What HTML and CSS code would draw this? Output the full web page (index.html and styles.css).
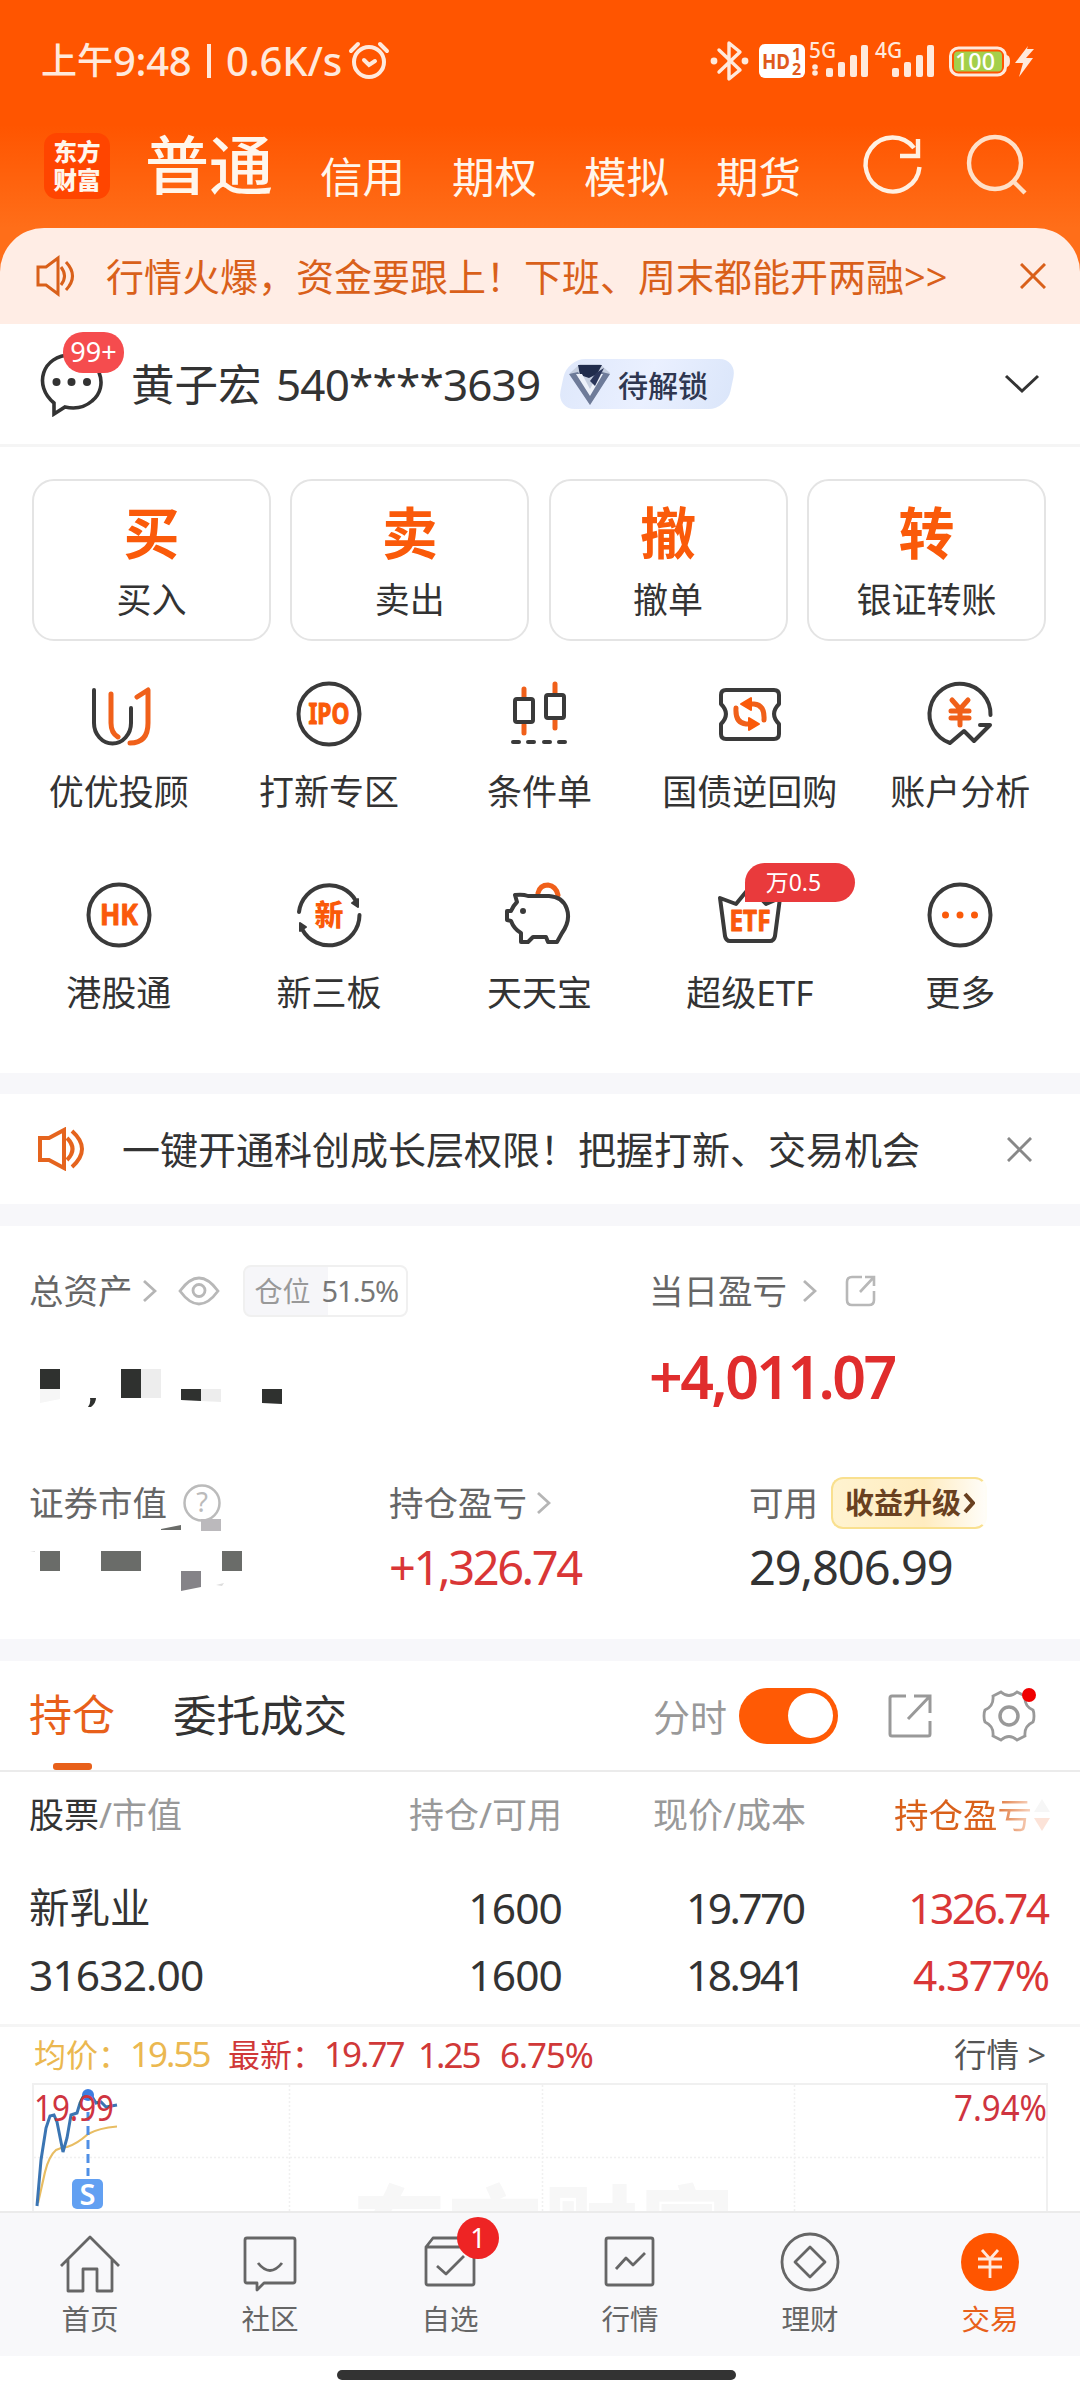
FILE: index.html
```html
<!DOCTYPE html>
<html lang="zh-CN">
<head>
<meta charset="utf-8">
<title>交易</title>
<link rel="stylesheet" href="styles.css">
</head>
<body>
<div class="page">
  <header class="top">
    <div class="status">
      <div class="status-text"><span class="st-cn">上午</span><span class="st-time">9:48</span><span class="st-sep"></span><span class="st-speed">0.6K/s</span></div>
      <svg class="alarm" width="42" height="42" viewBox="0 0 42 42" fill="none" stroke="#ffe9dc" stroke-width="4" stroke-linecap="round"><circle cx="21" cy="22" r="15"/><path d="M16 20l5 5 6-4M3 11l7-7M39 11l-7-7"/></svg>
      <svg class="signals" width="330" height="44" viewBox="0 0 330 44">
        <g fill="none" stroke="#ffe9dc" stroke-width="3.4" stroke-linejoin="round" stroke-linecap="round"><path d="M9 11l21 20-11 9V4l11 9L9 33"/></g>
        <circle cx="4" cy="22" r="3.4" fill="#ffe9dc"/><circle cx="35" cy="22" r="3.4" fill="#ffe9dc"/>
        <rect x="49" y="5" width="46" height="34" rx="6" fill="#fff"/>
        <text x="52" y="29.500" class="hd" textLength="28" lengthAdjust="spacingAndGlyphs">HD</text>
        <text x="82" y="20.500" class="hdn">1</text><text x="82" y="35.500" class="hdn">2</text>
        <g fill="#ffe9dc"><text x="99" y="19" class="net" textLength="27" lengthAdjust="spacingAndGlyphs">5G</text><text x="165" y="19" class="net" textLength="27" lengthAdjust="spacingAndGlyphs">4G</text>
        <circle cx="105" cy="28" r="2.800"/><circle cx="105" cy="34" r="2.800"/>
        <rect x="116" y="29" width="7" height="9" rx="2"/><rect x="128" y="23" width="7" height="15" rx="2"/><rect x="140" y="16" width="7" height="22" rx="2"/><rect x="151" y="6" width="7" height="32" rx="2"/>
        <rect x="182" y="29" width="7" height="9" rx="2"/><rect x="194" y="23" width="7" height="15" rx="2"/><rect x="206" y="16" width="7" height="22" rx="2"/><rect x="217" y="6" width="7" height="32" rx="2"/>
        <path d="M296 16q4 0 4 6t-4 6z"/><path d="M318 7l-13 17h8l-4 14 14-19h-7l8-9h-7z"/></g>
        <rect x="240.500" y="9" width="55" height="27" rx="8" fill="none" stroke="#ffe9dc" stroke-width="3"/>
        <rect x="244" y="12.500" width="48" height="20" rx="4" fill="#a4cf4a"/>
        <text x="245" y="30.500" class="bat" textLength="40" lengthAdjust="spacingAndGlyphs">100</text>
      </svg>
    </div>
    <nav class="nav">
      <div class="logo"><span>东方</span><span>财富</span></div>
      <b class="nav-main">普通</b>
      <span class="nav-tab">信用</span><span class="nav-tab">期权</span><span class="nav-tab">模拟</span><span class="nav-tab">期货</span>
      <svg class="nav-icons" width="170" height="66" viewBox="860 133 170 66" fill="none" stroke="#fff0e2" stroke-width="4.400"><path d="M914 148A27 27 0 1 0 919.500 167"/><path d="M918 139v17h-18"/><circle cx="995" cy="163" r="26" stroke="#ffe0c8"/><path d="M1013 181l12 12" stroke="#ffe0c8"/></svg>
    </nav>
  </header>

  <section class="notice">
    <svg width="42" height="42" viewBox="0 0 42 42" fill="none" stroke="#d9601a" stroke-width="3"><path d="M3 12h8L23 3v36l-12-9H3zM26 12q7 9 0 18M31 7q13 14 0 28"/></svg>
    <p>行情火爆，资金要跟上！下班、周末都能开两融&gt;&gt;</p>
    <svg class="close" width="26" height="26" viewBox="0 0 26 26" fill="none" stroke="#d9601a" stroke-width="3"><path d="M1 1l24 24M25 1L1 25"/></svg>
  </section>

  <section class="user">
    <div class="msg">
      <svg width="66" height="66" viewBox="38 350 66 66" fill="none" stroke="#333" stroke-width="3.600"><path d="M54 413V402C33 385 42 354 71 354s39 32 21 46c-8 7-18 8-27 6z"/><g fill="#333" stroke="none"><circle cx="56.500" cy="381" r="4"/><circle cx="71.500" cy="381" r="4"/><circle cx="87" cy="381" r="4"/></g></svg>
      <i class="count">99+</i>
    </div>
    <span class="name">黄子宏</span><span class="acct">540****3639</span>
    <div class="level">
      <svg width="44" height="46" viewBox="0 0 44 46"><path d="M2 12L12 3h20l10 9-20 32z" fill="#c6cfe0"/><path d="M10 4h24l-5 9-8 4-9-3z" fill="#202c4c"/><path d="M1 13l9-2 12 21L34 11l8 2-20 31z" fill="#6e7b99"/><path d="M8 13h6l8 15 8-15h5L22 35z" fill="#eef2fa"/><path d="M22 20l6-8 8-5-9 18z" fill="#2b365a"/></svg>
      <span>待解锁</span>
    </div>
    <svg class="down" width="36" height="22" viewBox="0 0 36 22" fill="none" stroke="#333" stroke-width="3"><path d="M2 3l16 15L34 3"/></svg>
  </section>

  <section class="actions">
    <div class="action"><b>买</b><span>买入</span></div>
    <div class="action"><b>卖</b><span>卖出</span></div>
    <div class="action"><b>撤</b><span>撤单</span></div>
    <div class="action"><b>转</b><span>银证转账</span></div>
  </section>

  <section class="grid">
    <div class="cell"><svg class="ic" viewBox="-35 -35 70 70"><path d="M-25-24V9a18 20 0 0 0 37 0V-6"/><path class="o" d="M-8-20V9q0 10 7 14M18-17l11-7V9q0 20-18 20"/></svg><span>优优投顾</span></div>
    <div class="cell"><svg class="ic" viewBox="-35 -35 70 70"><circle r="30.500"/><text y="10" textLength="41" lengthAdjust="spacingAndGlyphs">IPO</text></svg><span>打新专区</span></div>
    <div class="cell"><svg class="ic" viewBox="-35 -35 70 70"><path class="o" d="M-15-25v9M-15 11v8M16-30v9M16 5v9"/><rect x="-24" y="-15" width="18" height="23" rx="2"/><rect x="7" y="-19" width="18" height="23" rx="2"/><path d="M-26 28h6M-11 28h6M5 28h6M20 28h6"/></svg><span>条件单</span></div>
    <div class="cell"><svg class="ic" viewBox="-35 -35 70 70"><path d="M-24-24h48q5 0 5 5v9q-10 10 0 20v10q0 5-5 5h-48q-5 0-5-5V10q10-10 0-20v-9q0-5 5-5z"/><path class="o" d="M-1-10h5Q15-9 14 6M1 10h-5Q-15 9-14-6"/><path class="f" d="M-9-10l10-6v12zM9 10l-10-6v12z"/></svg><span>国债逆回购</span></div>
    <div class="cell"><svg class="ic" viewBox="-35 -35 70 70"><path d="M30.500 1A30.500 30.500 0 1 0-10 29L4 17l10 10L30 11H20"/><path class="o y" d="M-8-14L0-5l8-9M-9-3H9M-9 4H9M0-4v15"/></svg><span>账户分析</span></div>
    <div class="cell"><svg class="ic" viewBox="-35 -35 70 70"><circle r="30.500"/><text y="10" textLength="38" lengthAdjust="spacingAndGlyphs">HK</text></svg><span>港股通</span></div>
    <div class="cell"><svg class="ic" viewBox="-35 -35 70 70"><path d="M-30-3A30.500 30.500 0 0 1 27-14M30.500 0A30.500 30.500 0 0 1-27 14"/><path class="k" d="M29-16v8l-6-4zM-29 16V8l6 4z"/><text y="10.500" class="xin">新</text></svg><span>新三板</span></div>
    <div class="cell"><svg class="ic" viewBox="-35 -35 70 70"><path class="o" d="M-1-22Q1-30 9-30Q17-29 19-20"/><path d="M-24-20q8-1 13 1h21c18 1 25 20 13 37l-5 9H9l-2-5H-6l-5 5h-7v-9q-7-4-10-12l-4-1V-4h4q2-5 6-9z"/><circle class="k" cx="-16" cy="-4" r="2"/></svg><span>天天宝</span></div>
    <div class="cell"><svg class="ic" viewBox="-35 -35 70 70"><path d="M-30-17l5 38q1 5 5 5h40q4 0 5-5l5-38-14 6L0-28l-14 17z"/><text y="16" textLength="41" lengthAdjust="spacingAndGlyphs">ETF</text></svg><i class="tag">万0.5</i><span>超级ETF</span></div>
    <div class="cell"><svg class="ic" viewBox="-35 -35 70 70"><circle r="30.500"/><g class="f"><circle cx="-14.500" r="2.500"/><circle r="2.500"/><circle cx="14.500" r="2.500"/></g></svg><span>更多</span></div>
  </section>

  <section class="notice2">
    <svg width="50" height="44" viewBox="0 0 50 44" fill="none" stroke="#e5641e" stroke-width="4"><path d="M3 11h9L27 3v38l-15-8H3zM30 11q11 11 0 22M35 4q20 18 0 36"/></svg>
    <p>一键开通科创成长层权限！把握打新、交易机会</p>
    <svg class="close" width="25" height="25" viewBox="0 0 26 26" fill="none" stroke="#888" stroke-width="3"><path d="M1 1l24 24M25 1L1 25"/></svg>
  </section>

  <section class="assets">
    <div class="total">
      <div class="lab"><span>总资产</span><svg class="chev c1" viewBox="0 0 14 24"><path d="M1 2l11 10L1 22"/></svg>
        <svg class="eye" width="42" height="30" viewBox="0 0 42 30" fill="none" stroke="#b8b8b8" stroke-width="2.800"><path d="M2 15Q21-11 40 15Q21 41 2 15z"/><circle cx="21" cy="14.500" r="6"/></svg>
        <div class="chip"><span>仓位</span><em>51.5%</em></div></div>
      <svg class="mosaic" width="260" height="50" viewBox="30 1365 260 50"><path fill="#2f312f" d="M40 1369h20v20H40zM121 1369h20v29h-20zM181 1389h20v12l-20-1zM262 1389h20v15l-20-1zM90 1398h6q0 5-5 9h-3q3-4 2-9z"/><path fill="#ededed" d="M141 1369h20v29h-20zM201 1389h20v13l-20-1z"/><path fill="#f6f6f6" d="M40 1389h20v10l-20 4z"/></svg>
    </div>
    <div class="today">
      <div class="lab"><span>当日盈亏</span><svg class="chev c2" viewBox="0 0 14 24"><path d="M1 2l11 10L1 22"/></svg>
        <svg class="share-s" width="32" height="32" viewBox="0 0 32 32" fill="none" stroke="#b8b8b8" stroke-width="2.600"><path d="M17 2H7Q2 2 2 7v18q0 5 5 5h17q5 0 5-5V16M20 2h9v9M29 2L15 17"/></svg></div>
      <div class="big">+4,011.07</div>
    </div>
    <div class="mv">
      <div class="lab"><span>证券市值</span><svg class="ask" width="40" height="40" viewBox="0 0 40 40"><circle cx="20" cy="20" r="17.500" fill="none" stroke="#bbb" stroke-width="2.500"/><text x="20" y="29" text-anchor="middle">?</text></svg></div>
      <svg class="mosaic2" width="230" height="78" viewBox="20 1515 230 78"><path fill="#6a6c69" d="M40 1551h20v20H40zM101 1551h40v20h-40zM222 1551h20v20h-20zM161 1529l20-4v5h-20z"/><path fill="#858388" d="M181 1571h20v16l-20 4z"/><path fill="#bbb9bc" d="M201 1519h20v12h-20z"/><path fill="#ddd" d="M216 1585l8-2-2 3zM30 1552l5-1v1z"/></svg>
    </div>
    <div class="hold">
      <div class="lab"><span>持仓盈亏</span><svg class="chev c3" viewBox="0 0 14 24"><path d="M1 2l11 10L1 22"/></svg></div>
      <div class="val red n1">+1,326.74</div>
    </div>
    <div class="avail">
      <div class="lab"><span>可用</span><div class="gold">收益升级<svg width="12" height="22" viewBox="0 0 12 22" fill="none" stroke="#694020" stroke-width="4"><path d="M2 2l8 9-8 9"/></svg></div></div>
      <div class="val n2">29,806.99</div>
    </div>
  </section>

  <section class="tabs">
    <span class="tab on">持仓</span><span class="tab t2">委托成交</span><span class="fs">分时</span>
    <div class="toggle"></div>
    <svg class="share-l" width="44" height="44" viewBox="0 0 44 44" fill="none" stroke="#999" stroke-width="3"><path d="M18 2H4q-2 0-2 2v36q0 2 2 2h36q2 0 2-2V27M26 2h16v17M42 2L20 25"/></svg>
    <div class="gear"><svg width="54" height="54" viewBox="-27 -27 54 54" fill="none" stroke="#999" stroke-width="2.800"><path d="M-8-24Q0-17 8-24L16-20Q15-10 24-6Q25-4 25 0T24 6Q15 10 16 20L8 24Q0 17-8 24L-16 20Q-15 10-24 6Q-25 4-25 0T-24-6Q-15-10-16-20z"/><circle r="9" stroke-width="3.500"/></svg><i></i></div>
  </section>

  <section class="table">
    <div class="tr th"><span class="l"><b>股票</b>/市值</span><span>持仓/可用</span><span>现价/成本</span><span class="sort">持仓盈亏<svg width="16" height="32" viewBox="0 0 16 32"><path d="M0 13L8 0l8 13z" fill="#f6f6f6"/><path d="M0 19h16L8 32z" fill="#fce3d8"/></svg></span></div>
    <div class="tr r1"><span class="l cn">新乳业</span><span class="k1">1600</span><span class="k2">19.770</span><span class="red k2">1326.74</span></div>
    <div class="tr r2"><span class="l k1">31632.00</span><span class="k1">1600</span><span class="k2">18.941</span><span class="red k3">4.377%</span></div>
  </section>

  <section class="quote">
    <span class="avg">均价：<em>19.55</em></span><span class="new">最新：<em>19.77</em></span><em class="chg">1.25</em><em class="pct">6.75%</em><span class="more">行情 &gt;</span>
  </section>
  <svg class="chart" width="1080" height="130" viewBox="0 2082 1080 130">
    <text x="352" y="2265" class="wm" textLength="382">东方财富</text>
    <g fill="none" stroke="#f0f0f0" stroke-width="2"><path d="M33 2212V2084h1014v128"/><path d="M34 2157.500h1012M289.500 2085v127M542.500 2085v127M794.500 2085v127" stroke-width="1.500" stroke-dasharray="2 2"/></g>
    <path d="M38 2203L45 2172Q49 2156 56 2150Q62 2147 67 2147Q77 2144 88 2134Q99 2128 117 2126.500" fill="none" stroke="#e8bd63" stroke-width="2.200"/>
    <path d="M88 2112v64" stroke="#4f8fe6" stroke-width="3" stroke-dasharray="9 5"/>
    <path d="M37 2206L41 2160L46 2128L50 2116L54 2115L57 2122L63 2152L67 2138L71 2115L77 2113L80 2103L84 2095H91L96 2103L101 2102L106 2107L117 2105" fill="none" stroke="#3b75b3" stroke-width="3"/>
    <circle cx="88" cy="2095" r="6" fill="#3d7de0"/>
    <text x="34" y="2120.500" class="cl" textLength="80" lengthAdjust="spacingAndGlyphs">19.99</text>
    <text x="954" y="2120.500" class="cl" textLength="93" lengthAdjust="spacingAndGlyphs">7.94%</text>
    <rect x="72" y="2179" width="31" height="30" rx="5" fill="#62a0f2"/><text x="87.500" y="2204.500" class="s" text-anchor="middle">S</text>
  </svg>

  <footer class="tabbar">
    <div class="ti"><svg viewBox="-32 -32 64 64"><path d="M-29 4L0-25 29 4M-22-3v32h15V7H7v22h15V-3"/></svg><span>首页</span></div>
    <div class="ti"><svg viewBox="-32 -32 64 64"><path d="M-23-24h46q2 0 2 2v41q0 2-2 2H-6l-7 7v-7h-10q-2 0-2-2v-41q0-2 2-2zM-12 1Q0 16 12 1"/></svg><span>社区</span></div>
    <div class="ti"><svg viewBox="-32 -32 64 64"><path d="M-24-15h48v36q0 2-2 2h-44q-2 0-2-2zM-24-15l7-9h34l7 9M-13 4l9 8L14-6"/></svg><i class="dot">1</i><span>自选</span></div>
    <div class="ti"><svg viewBox="-32 -32 64 64"><rect x="-24" y="-24" width="47" height="47" rx="2"/><path d="M-14 7L-4-4 3 3 15-9"/></svg><span>行情</span></div>
    <div class="ti"><svg viewBox="-32 -32 64 64"><circle r="28"/><path d="M0-15L15 0 0 15-15 0z"/></svg><span>理财</span></div>
    <div class="ti on"><svg viewBox="-32 -32 64 64"><circle r="29" class="fill"/><path d="M-8-12L0-3l8-9M-12-3h24M-12 5h24M0-3v19"/></svg><span>交易</span></div>
  </footer>
  <div class="home"><i></i></div>
</div>
</body>
</html>
```

FILE: styles.css
```css
* { box-sizing: border-box; margin: 0; padding: 0; }
body { width: 1080px; height: 2400px; overflow: hidden; background: #fff; color: #333; font-family: "Noto Sans", "Noto Sans CJK SC", sans-serif; }
i, em { font-style: normal; }
svg { display: block; flex: none; }
span, p, b { white-space: nowrap; }
.page { display: flex; flex-direction: column; height: 2400px; background: linear-gradient(#ff6e19 300px, #fff 300px); }
.page > * { flex: none; }
.red { color: #d93636; }

.top { height: 228px; background: linear-gradient(#ff5500 0 125px, #ff6e19 228px); }
.status { height: 122px; padding-left: 41px; display: flex; align-items: center; color: #ffe9dc; }
.status-text { display: flex; align-items: center; line-height: 50px; }
.st-cn { font-size: 36px; font-weight: 500; }
.st-time { font-size: 40px; width: 82px; font-weight: 500; letter-spacing: -.3px; }
.st-sep { width: 4px; height: 34px; margin: 0 15px 0 12px; background: #ffe9dc; }
.st-speed { font-size: 40px; width: 124px; font-weight: 500; letter-spacing: -.1px; }
.alarm { margin: -1px 0 0 -2px; }
.signals { margin-left: 320px; }
.hd { font: 700 22px "Noto Sans"; fill: #e05a1c; }
.hdn { font: 700 16px "Noto Sans"; fill: #e05a1c; }
.net { font: 500 21px "Noto Sans"; }
.bat { font: 500 24px "Noto Sans"; fill: #fff; }

.nav { height: 106px; padding: 0 0 0 44px; display: flex; align-items: flex-start; color: #fff6ec; }
.logo { width: 66px; height: 66px; margin-top: 11px; border-radius: 13px; background: #ff4500; display: flex; flex-direction: column; align-items: center; justify-content: center; font-size: 23.500px; font-weight: 900; line-height: 28px; }
.nav-main { margin: -2px 0 0 35px; width: 130px; font-size: 64px; font-weight: 500; line-height: 89px; }
.nav-tab { width: 132px; font-size: 42.500px; line-height: 109px; }
.nav-main + .nav-tab { margin-left: 45px; }
.nav-icons { margin: 11px 0 0 12px; }

.notice { height: 96px; padding: 0 34px 0 35px; display: flex; align-items: center; background: #ffede5; color: #d9601a; border-radius: 44px 44px 0 0; }
.notice p { margin-left: 29px; font-size: 38px; line-height: 56px; }
.close { margin-left: auto; }

.user { height: 123px; padding: 0 40px 0 38px; display: flex; align-items: center; background: #fff; border-bottom: 3px solid #f5f5f5; }
.msg { position: relative; }
.count { position: absolute; left: 25px; top: -19px; width: 61px; height: 41px; border-radius: 20px; background: #f54c4e; color: #fff; font-size: 27px; line-height: 40px; text-align: center; }
.name { margin-left: 27px; width: 145px; font-size: 43.500px; line-height: 60px; }
.acct { width: 282px; font-size: 44px; line-height: 60px; letter-spacing: -.8px; }
.level { width: 178px; height: 50px; display: flex; align-items: center; color: #2e3650; font-size: 30px; font-weight: 500; position: relative; padding-left: 10px; z-index: 0; }
.level::before { content: ""; position: absolute; inset: 0 4px; transform: skewX(-12deg); border-radius: 18px; background: linear-gradient(100deg, #dfe8fb, #eaf0ff 50%, #dbe6fa); z-index: -1; }
.level span { margin-left: 6px; }
.down { margin-left: auto; }

.actions { height: 195px; padding: 32px 32px 0; display: grid; grid-template-columns: repeat(4, 239px); column-gap: 19.300px; background: #fff; }
.action { height: 162px; border: 2px solid #e4e4e4; border-radius: 22px; display: flex; flex-direction: column; align-items: center; }
.action b { font-size: 56px; font-weight: 700; line-height: 70px; margin-top: 16px; color: #fa5a0a; }
.action span { font-size: 35px; line-height: 50px; margin-top: 8px; }

.grid { height: 431px; padding: 37px 14px 0 13.500px; display: grid; grid-template-columns: repeat(5, 210.400px); grid-auto-rows: 201px; background: #fff; }
.cell { display: flex; flex-direction: column; align-items: center; position: relative; }
.cell span { font-size: 35px; line-height: 50px; margin-top: 18px; }
.ic { width: 70px; height: 70px; overflow: visible; fill: none; stroke: #3a3a3a; stroke-width: 4; stroke-linecap: round; stroke-linejoin: round; }
.ic .o { stroke: #f0601a; stroke-width: 5; }
.ic .y { stroke-width: 5; }
.ic .f { fill: #fa5a0a; stroke: #fa5a0a; stroke-width: 2; }
.ic .k { fill: #3a3a3a; stroke-width: 2; }
.ic text { font: 700 28px "Noto Sans"; fill: #fa5a0a; stroke: #fa5a0a; stroke-width: 1; text-anchor: middle; }
.ic text.xin { font: 900 29px "Noto Sans CJK SC"; stroke: none; }
.tag { position: absolute; left: 100px; top: -17px; width: 110px; height: 39px; padding-left: 21px; border-radius: 20px 20px 20px 0; background: #e93a3c; color: #fff; font-size: 23px; line-height: 39px; }

.notice2 { height: 153px; border: solid #f7f7fa; border-width: 21px 0 22px; padding: 0 48px 0 37px; display: flex; align-items: center; background: #fff; }
.notice2 p { margin-left: 35px; font-size: 38px; line-height: 56px; }

.assets { height: 435px; padding: 38px 0 0 29px; display: grid; grid-template-columns: 360px 260px 100px 300px; grid-template-rows: 212px 180px; background: #fff; border-bottom: 22px solid #f7f7fa; color: #666; }
.total { grid-column: 1 / 3; }
.today { grid-column: 3 / 5; width: 400px; }
.mv, .hold { grid-row: 2; }
.avail { grid-row: 2; grid-column: 4; }
.lab { height: 54px; display: flex; align-items: center; font-size: 34.500px; line-height: 50px; }
.chev { width: 14px; height: 24px; fill: none; stroke: #b5b5b5; stroke-width: 2.800; }
.c1 { margin-left: 10px; }
.c2 { margin-left: 16px; }
.c3 { margin-left: 10px; }
.eye { margin-left: 21px; }
.chip { margin-left: 23px; width: 165px; height: 52px; border: 2px solid #f0f0f0; border-radius: 8px; background: linear-gradient(90deg, #f6f6f9 51.500%, #fff 51.500%); display: flex; align-items: center; padding-left: 10px; font-size: 28px; color: #999; }
.chip em { margin-left: 11px; font-size: 29px; letter-spacing: -1px; color: #777; }
.mosaic { margin: 47px 0 0 1px; }
.share-s { margin-left: 28px; }
.big { margin-top: 18px; font-size: 59px; font-weight: 600; line-height: 80px; letter-spacing: -2.600px; color: #e02d2d; }
.ask { margin-left: 15px; }
.ask text { font: 27px "Noto Sans"; fill: #bbb; }
.mosaic2 { margin: -15px 0 0 -9px; }
.val { font-size: 47px; line-height: 60px; margin-top: 7px; }
.n1 { letter-spacing: -2.400px; }
.n2 { letter-spacing: -1.100px; color: #333; }
.gold { margin-left: 13px; width: 156px; height: 52px; padding-left: 12px; border-radius: 12px; border: 2px solid #f9e08f; border-right-color: #fffdf5; background: linear-gradient(90deg, #fff3d0, #ffecc0 60%, #fffdf8); display: flex; align-items: center; gap: 2px; color: #694020; font-size: 29px; font-weight: 700; white-space: nowrap; }

.tabs { height: 111px; padding-left: 29px; display: flex; align-items: center; background: #fff; border-bottom: 2px solid #ebebeb; }
.tab { font-size: 43px; line-height: 108px; height: 109px; }
.tab.on { width: 84px; color: #e8601a; position: relative; }
.tab.on::after { content: ""; position: absolute; left: 24px; bottom: 0; width: 39px; height: 7px; border-radius: 3px; background: #e8601a; }
.t2 { margin-left: 60px; font-size: 43.500px; }
.fs { margin-left: 306px; width: 86px; font-size: 37px; color: #999; }
.toggle { width: 99px; height: 56px; border-radius: 28px; background: #ff5a05; padding: 5.500px 5px; display: flex; justify-content: flex-end; }
.toggle::after { content: ""; width: 45px; height: 45px; border-radius: 50%; background: #fff; }
.share-l { margin-left: 50px; }
.gear { margin-left: 50px; position: relative; }
.gear i { position: absolute; left: 40px; top: -1px; width: 14px; height: 14px; border-radius: 50%; background: #f00000; }

.table { height: 255px; padding: 0 30px 0 29px; background: #fff; border-bottom: 3px solid #f5f5f5; }
.tr { display: grid; grid-template-columns: 289px 244px 244px 244px; text-align: right; line-height: 60px; font-size: 42.500px; }
.tr .l { text-align: left; }
.th { padding-top: 13px; font-size: 35px; color: #999; }
.th b { font-weight: 400; color: #333; }
.sort { display: flex; justify-content: flex-end; align-items: center; gap: 2px; font-size: 34.500px; background: linear-gradient(90deg, #d9601a 75%, #fbe0d2 94%); background-clip: text; -webkit-background-clip: text; color: transparent; }
.r1 { margin-top: 33px; }
.r2 { margin-top: 7px; }
.cn { font-size: 40.500px; }
.k1 { letter-spacing: -.9px; }
.k2 { letter-spacing: -2.600px; padding-right: 2.600px; }
.k3 { letter-spacing: -1.400px; padding-right: 1.400px; }

.quote { height: 55px; padding: 0 34px 0 34px; display: flex; align-items: center; font-size: 32px; line-height: 54px; color: #d03838; }
.quote em { font-size: 35px; letter-spacing: -2px; }
.avg { width: 194px; color: #ebb850; }
.new { width: 190px; }
.chg { width: 82px; }
.quote .pct { letter-spacing: -1.200px; }
.more { margin-left: auto; font-size: 32.500px; color: #555; }
.chart { margin-bottom: -1px; }
.wm { font: 900 94px "Noto Sans CJK SC"; fill: #f7f7f7; }
.cl { font: 37px "Noto Sans"; fill: #cf3440; }
.s { font: 600 29px "Noto Sans"; fill: #fff; }

.tabbar { height: 145px; display: grid; grid-template-columns: repeat(6, 180px); background: #f8f8fa; border-top: 2px solid #ebebeb; padding-top: 17px; z-index: 1; }
.ti { display: flex; flex-direction: column; align-items: center; position: relative; font-size: 28.500px; line-height: 40px; color: #666; }
.ti svg { width: 64px; height: 64px; fill: none; stroke: #666; stroke-width: 2.800; stroke-linejoin: round; }
.ti span { margin-top: 5px; }
.ti.on { color: #e8601a; }
.ti.on svg { stroke: #ffe9dc; }
.ti .fill { fill: #ff5500; stroke: none; }
.dot { position: absolute; left: 97px; top: -13px; width: 42px; height: 42px; border-radius: 50%; background: #ee2424; color: #fff; font-size: 27px; line-height: 41px; text-align: center; }
.home { display: flex; justify-content: center; padding: 14px 7px 0 0; }
.home i { width: 399px; height: 10px; border-radius: 5px; background: #333; }
```
